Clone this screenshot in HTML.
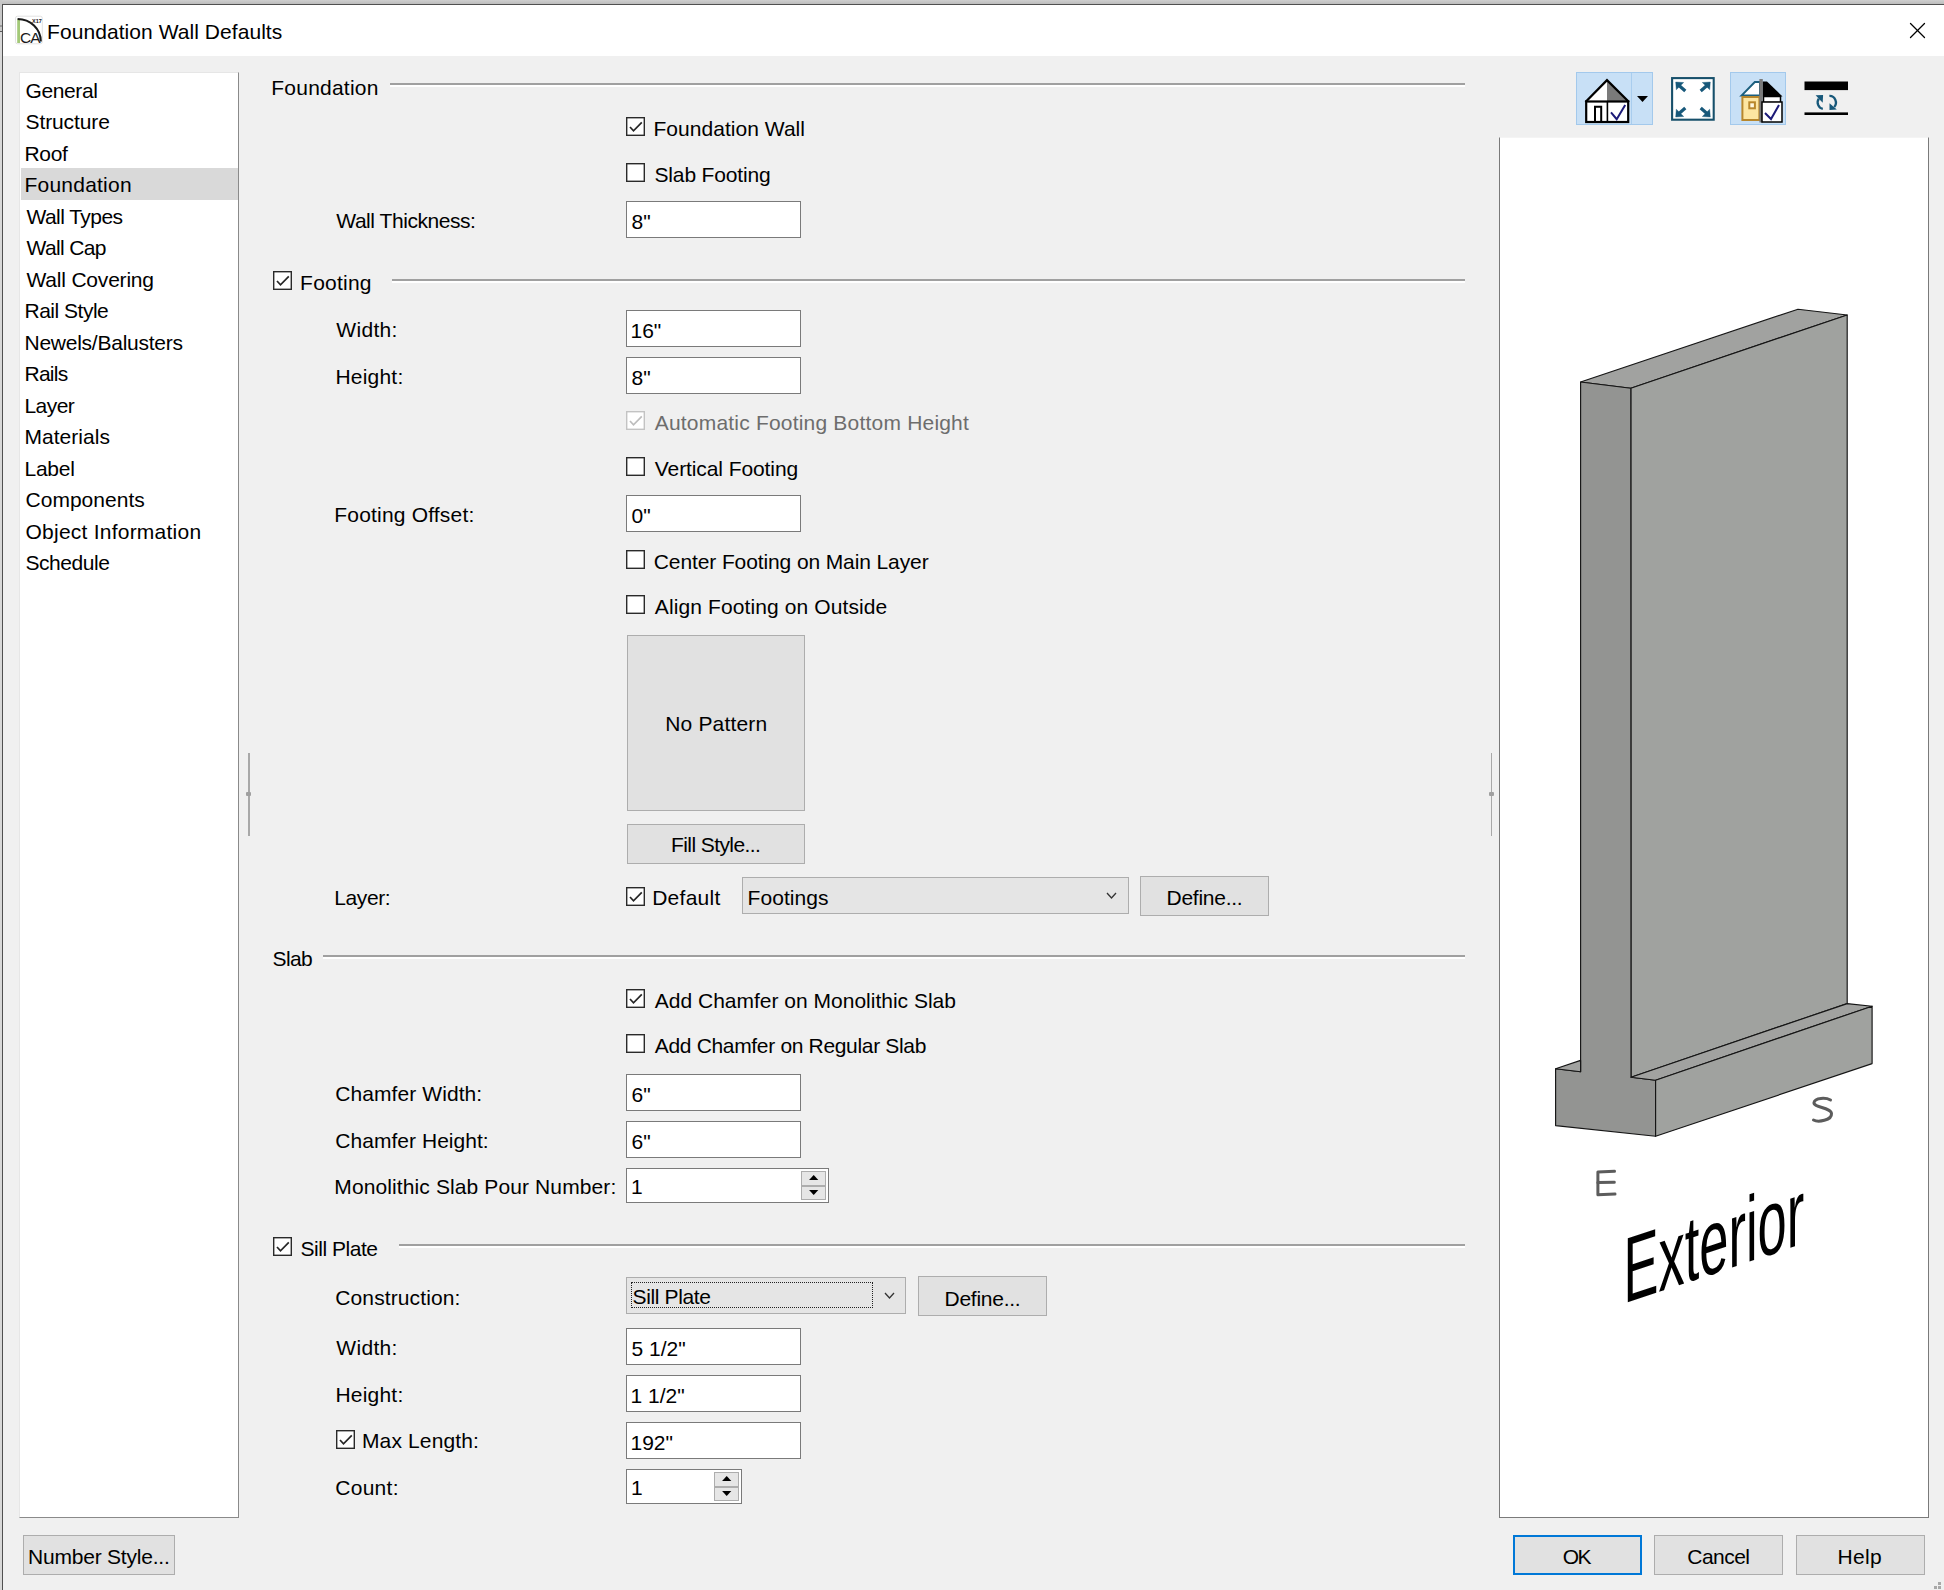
<!DOCTYPE html>
<html><head><meta charset="utf-8"><title>Foundation Wall Defaults</title>
<style>
html,body{margin:0;padding:0;}
body{width:1944px;height:1590px;position:relative;overflow:hidden;background:#f0f0f0;font-family:"Liberation Sans",sans-serif;font-size:21px;color:#000;}
.t{position:absolute;line-height:24px;white-space:pre;}
.ab{position:absolute;overflow:visible;}
</style></head><body>

<div style="position:absolute;left:0px;top:0px;width:1944px;height:4px;background:linear-gradient(#cfcfcf,#bdbdbd);"></div>
<div style="position:absolute;left:0px;top:0px;width:2px;height:1590px;background:#c8c8c8;"></div>
<div style="position:absolute;left:0px;top:25px;width:2px;height:2px;background:#9a9a9a;"></div>
<div style="position:absolute;left:0px;top:31px;width:2px;height:1px;background:#5a5a5a;"></div>
<div style="position:absolute;left:0px;top:32px;width:2px;height:1558px;background:#d8d8d8;"></div>
<div style="position:absolute;left:2px;top:4px;width:1942px;height:1px;background:#505050;"></div>
<div style="position:absolute;left:2px;top:4px;width:1px;height:1586px;background:#505050;"></div>
<div style="position:absolute;left:3px;top:5px;width:1941px;height:51px;background:#ffffff;"></div>
<svg class="ab" style="left:15px;top:15px" width="30" height="32" viewBox="15 15 30 32">
<rect x="15.5" y="16.2" width="26.8" height="27.6" rx="2" fill="none" stroke="#e2e2e2" stroke-width="1"/>
<rect x="17.2" y="19.2" width="2.8" height="23.8" fill="#a3c978"/>
<path d="M17.6,19 A23.2,22.5 0 0 1 40.8,41.5" fill="none" stroke="#1a1a1a" stroke-width="2.1"/>
<text x="20" y="43.3" font-family="Liberation Sans" font-size="15.5" fill="#1a1a1a" letter-spacing="-1">CA</text>
<text x="32" y="22.5" font-family="Liberation Sans" font-size="5.5" font-weight="bold" fill="#1a1a1a">X17</text>
</svg>
<div class="t" style="top:20px;left:47.10px;letter-spacing:0.057px;">Foundation Wall Defaults</div>
<svg class="ab" style="left:1905px;top:18px" width="25" height="25" viewBox="1905 18 25 25">
<line x1="1910.5" y1="23.5" x2="1924.5" y2="37.5" stroke="#000" stroke-width="1.3" stroke-linecap="round"/>
<line x1="1924.5" y1="23.5" x2="1910.5" y2="37.5" stroke="#000" stroke-width="1.3" stroke-linecap="round"/>
</svg>
<div style="position:absolute;left:19px;top:72px;width:220px;height:1446px;background:#fff;box-sizing:border-box;border-left:1px solid #e6e6e6;border-top:1px solid #e6e6e6;border-right:1px solid #8a8a8a;border-bottom:1px solid #8a8a8a;"></div>
<div style="position:absolute;left:21px;top:168px;width:217px;height:32px;background:#d9d9d9;"></div>
<div class="t" style="top:79px;left:25.50px;letter-spacing:-0.383px;">General</div>
<div class="t" style="top:110px;left:25.50px;letter-spacing:-0.100px;">Structure</div>
<div class="t" style="top:142px;left:24.50px;letter-spacing:-0.333px;">Roof</div>
<div class="t" style="top:173px;left:24.50px;letter-spacing:0.222px;">Foundation</div>
<div class="t" style="top:205px;left:26.50px;letter-spacing:-0.556px;">Wall Types</div>
<div class="t" style="top:236px;left:26.50px;letter-spacing:-0.629px;">Wall Cap</div>
<div class="t" style="top:268px;left:26.50px;letter-spacing:-0.200px;">Wall Covering</div>
<div class="t" style="top:299px;left:24.50px;letter-spacing:-0.489px;">Rail Style</div>
<div class="t" style="top:331px;left:24.50px;letter-spacing:-0.247px;">Newels/Balusters</div>
<div class="t" style="top:362px;left:24.50px;letter-spacing:-0.750px;">Rails</div>
<div class="t" style="top:394px;left:24.50px;letter-spacing:-0.575px;">Layer</div>
<div class="t" style="top:425px;left:24.50px;letter-spacing:0.025px;">Materials</div>
<div class="t" style="top:457px;left:24.50px;letter-spacing:-0.250px;">Label</div>
<div class="t" style="top:488px;left:25.50px;letter-spacing:0.022px;">Components</div>
<div class="t" style="top:520px;left:25.50px;letter-spacing:0.235px;">Object Information</div>
<div class="t" style="top:551px;left:25.50px;letter-spacing:-0.443px;">Schedule</div>
<div style="position:absolute;left:248px;top:753px;width:1.5px;height:83px;background:#a8a8a8;"></div>
<div style="position:absolute;left:246px;top:792px;width:5px;height:4px;background:#a0a0a0;border-radius:1px;"></div>
<div style="position:absolute;left:1491px;top:753px;width:1px;height:83px;background:#a8a8a8;"></div>
<div style="position:absolute;left:1489px;top:792px;width:5px;height:4px;background:#a0a0a0;border-radius:1px;"></div>
<div class="t" style="top:76px;left:271.30px;letter-spacing:0.222px;">Foundation</div>
<div style="position:absolute;left:390px;top:83px;width:1075px;height:2px;background:#a0a0a0;"></div>
<div style="position:absolute;left:390px;top:85px;width:1075px;height:2px;background:#ffffff;"></div>
<svg class="ab" style="left:626px;top:117px" width="19" height="19" viewBox="0 0 19 19"><rect x="0.7" y="0.7" width="17.6" height="17.6" fill="#fff" stroke="#2a2a2a" stroke-width="1.4"/><polyline points="4,10 7.5,13.8 15.8,5.4" fill="none" stroke="#262626" stroke-width="1.7"/></svg>
<div class="t" style="top:117px;left:653.50px;letter-spacing:0.036px;">Foundation Wall</div>
<svg class="ab" style="left:626px;top:163px" width="19" height="19" viewBox="0 0 19 19"><rect x="0.7" y="0.7" width="17.6" height="17.6" fill="#fff" stroke="#2a2a2a" stroke-width="1.4"/></svg>
<div class="t" style="top:163px;left:654.50px;letter-spacing:-0.155px;">Slab Footing</div>
<div class="t" style="top:209px;left:336.30px;letter-spacing:-0.450px;">Wall Thickness:</div>
<div style="position:absolute;left:626px;top:201px;width:175px;height:37px;background:#fff;border:1px solid #7a7a7a;box-sizing:border-box;"></div>
<div class="t" style="top:210px;left:631.50px;">8"</div>
<svg class="ab" style="left:273px;top:271px" width="19" height="19" viewBox="0 0 19 19"><rect x="0.7" y="0.7" width="17.6" height="17.6" fill="#fff" stroke="#2a2a2a" stroke-width="1.4"/><polyline points="4,10 7.5,13.8 15.8,5.4" fill="none" stroke="#262626" stroke-width="1.7"/></svg>
<div class="t" style="top:271px;left:300.10px;letter-spacing:0.233px;">Footing</div>
<div style="position:absolute;left:392px;top:279px;width:1073px;height:2px;background:#a0a0a0;"></div>
<div style="position:absolute;left:392px;top:281px;width:1073px;height:2px;background:#ffffff;"></div>
<div class="t" style="top:318px;left:336.30px;letter-spacing:0.320px;">Width:</div>
<div style="position:absolute;left:626px;top:310px;width:175px;height:37px;background:#fff;border:1px solid #7a7a7a;box-sizing:border-box;"></div>
<div class="t" style="top:319px;left:630.50px;">16"</div>
<div class="t" style="top:365px;left:335.40px;letter-spacing:0.217px;">Height:</div>
<div style="position:absolute;left:626px;top:357px;width:175px;height:37px;background:#fff;border:1px solid #7a7a7a;box-sizing:border-box;"></div>
<div class="t" style="top:366px;left:631.50px;">8"</div>
<svg class="ab" style="left:626px;top:411px" width="19" height="19" viewBox="0 0 19 19"><rect x="0.7" y="0.7" width="17.6" height="17.6" fill="#fff" stroke="#c3c3c3" stroke-width="1.4"/><polyline points="4,10 7.5,13.8 15.8,5.4" fill="none" stroke="#bdbdbd" stroke-width="1.7"/></svg>
<div class="t" style="top:411px;left:654.70px;letter-spacing:0.200px;color:#6d6d6d;">Automatic Footing Bottom Height</div>
<svg class="ab" style="left:626px;top:457px" width="19" height="19" viewBox="0 0 19 19"><rect x="0.7" y="0.7" width="17.6" height="17.6" fill="#fff" stroke="#2a2a2a" stroke-width="1.4"/></svg>
<div class="t" style="top:457px;left:654.80px;letter-spacing:-0.093px;">Vertical Footing</div>
<div class="t" style="top:503px;left:334.30px;letter-spacing:0.186px;">Footing Offset:</div>
<div style="position:absolute;left:626px;top:495px;width:175px;height:37px;background:#fff;border:1px solid #7a7a7a;box-sizing:border-box;"></div>
<div class="t" style="top:504px;left:631.50px;">0"</div>
<svg class="ab" style="left:626px;top:550px" width="19" height="19" viewBox="0 0 19 19"><rect x="0.7" y="0.7" width="17.6" height="17.6" fill="#fff" stroke="#2a2a2a" stroke-width="1.4"/></svg>
<div class="t" style="top:550px;left:653.80px;letter-spacing:-0.111px;">Center Footing on Main Layer</div>
<svg class="ab" style="left:626px;top:595px" width="19" height="19" viewBox="0 0 19 19"><rect x="0.7" y="0.7" width="17.6" height="17.6" fill="#fff" stroke="#2a2a2a" stroke-width="1.4"/></svg>
<div class="t" style="top:595px;left:654.80px;letter-spacing:0.109px;">Align Footing on Outside</div>
<div style="position:absolute;left:627px;top:635px;width:178px;height:176px;background:#e1e1e1;border:1px solid #adadad;box-sizing:border-box;"></div>
<div class="t" style="top:712px;left:665.20px;letter-spacing:0.178px;">No Pattern</div>
<div style="position:absolute;left:627px;top:824px;width:178px;height:40px;background:#e1e1e1;border:1px solid #adadad;box-sizing:border-box;"></div>
<div class="t" style="top:833px;left:671.00px;letter-spacing:-0.583px;">Fill Style...</div>
<div class="t" style="top:886px;left:334.30px;letter-spacing:-0.400px;">Layer:</div>
<svg class="ab" style="left:626px;top:887px" width="19" height="19" viewBox="0 0 19 19"><rect x="0.7" y="0.7" width="17.6" height="17.6" fill="#fff" stroke="#2a2a2a" stroke-width="1.4"/><polyline points="4,10 7.5,13.8 15.8,5.4" fill="none" stroke="#262626" stroke-width="1.7"/></svg>
<div class="t" style="top:886px;left:652.20px;letter-spacing:0.267px;">Default</div>
<div style="position:absolute;left:742px;top:877px;width:387px;height:37px;background:#e5e5e5;border:1px solid #adadad;box-sizing:border-box;"></div>
<div class="t" style="top:886px;left:747.60px;letter-spacing:0.057px;">Footings</div>
<svg class="ab" style="left:1106px;top:892px" width="12" height="8" viewBox="0 0 12 8"><polyline points="1,1 5.5,6 10,1" fill="none" stroke="#333" stroke-width="1.3"/></svg>
<div style="position:absolute;left:1140px;top:876px;width:129px;height:40px;background:#e1e1e1;border:1px solid #adadad;box-sizing:border-box;"></div>
<div class="t" style="top:886px;left:1166.50px;letter-spacing:-0.250px;">Define...</div>
<div class="t" style="top:947px;left:272.60px;letter-spacing:-0.667px;">Slab</div>
<div style="position:absolute;left:323px;top:955px;width:1142px;height:2px;background:#a0a0a0;"></div>
<div style="position:absolute;left:323px;top:957px;width:1142px;height:2px;background:#ffffff;"></div>
<svg class="ab" style="left:626px;top:989px" width="19" height="19" viewBox="0 0 19 19"><rect x="0.7" y="0.7" width="17.6" height="17.6" fill="#fff" stroke="#2a2a2a" stroke-width="1.4"/><polyline points="4,10 7.5,13.8 15.8,5.4" fill="none" stroke="#262626" stroke-width="1.7"/></svg>
<div class="t" style="top:989px;left:654.80px;">Add Chamfer on Monolithic Slab</div>
<svg class="ab" style="left:626px;top:1034px" width="19" height="19" viewBox="0 0 19 19"><rect x="0.7" y="0.7" width="17.6" height="17.6" fill="#fff" stroke="#2a2a2a" stroke-width="1.4"/></svg>
<div class="t" style="top:1034px;left:654.80px;letter-spacing:-0.331px;">Add Chamfer on Regular Slab</div>
<div class="t" style="top:1082px;left:335.30px;letter-spacing:0.077px;">Chamfer Width:</div>
<div style="position:absolute;left:626px;top:1074px;width:175px;height:37px;background:#fff;border:1px solid #7a7a7a;box-sizing:border-box;"></div>
<div class="t" style="top:1083px;left:631.50px;">6"</div>
<div class="t" style="top:1129px;left:335.30px;letter-spacing:0.036px;">Chamfer Height:</div>
<div style="position:absolute;left:626px;top:1121px;width:175px;height:37px;background:#fff;border:1px solid #7a7a7a;box-sizing:border-box;"></div>
<div class="t" style="top:1130px;left:631.50px;">6"</div>
<div class="t" style="top:1175px;left:334.30px;letter-spacing:0.111px;">Monolithic Slab Pour Number:</div>
<div style="position:absolute;left:626px;top:1168px;width:203px;height:35px;background:#fff;border:1px solid #7a7a7a;box-sizing:border-box;"></div>
<div class="t" style="top:1175px;left:631.00px;">1</div>
<div style="position:absolute;left:800.5px;top:1171px;width:25.5px;height:15px;background:#e6e6e6;border:1px solid #adadad;box-sizing:border-box;"></div>
<div style="position:absolute;left:800.5px;top:1186px;width:25.5px;height:14px;background:#e6e6e6;border:1px solid #adadad;box-sizing:border-box;"></div>
<svg class="ab" style="left:800.5px;top:1168px" width="26" height="35" viewBox="0 0 26 35"><polygon points="8.1,12 17.299999999999997,12 12.7,7" fill="#000"/><polygon points="8.1,22 17.299999999999997,22 12.7,27" fill="#000"/></svg>
<svg class="ab" style="left:273px;top:1237px" width="19" height="19" viewBox="0 0 19 19"><rect x="0.7" y="0.7" width="17.6" height="17.6" fill="#fff" stroke="#2a2a2a" stroke-width="1.4"/><polyline points="4,10 7.5,13.8 15.8,5.4" fill="none" stroke="#262626" stroke-width="1.7"/></svg>
<div class="t" style="top:1237px;left:300.60px;letter-spacing:-0.478px;">Sill Plate</div>
<div style="position:absolute;left:399px;top:1244px;width:1066px;height:2px;background:#a0a0a0;"></div>
<div style="position:absolute;left:399px;top:1246px;width:1066px;height:2px;background:#ffffff;"></div>
<div class="t" style="top:1286px;left:335.30px;letter-spacing:0.108px;">Construction:</div>
<div style="position:absolute;left:626px;top:1277px;width:280px;height:37px;background:#e5e5e5;border:1px solid #adadad;box-sizing:border-box;"></div>
<div style="position:absolute;left:631px;top:1282px;width:242px;height:26px;border:1px dotted #222;box-sizing:border-box;"></div>
<div class="t" style="top:1285px;left:632.60px;letter-spacing:-0.367px;">Sill Plate</div>
<svg class="ab" style="left:884px;top:1292px" width="12" height="8" viewBox="0 0 12 8"><polyline points="1,1 5.5,6 10,1" fill="none" stroke="#333" stroke-width="1.3"/></svg>
<div style="position:absolute;left:918px;top:1276px;width:129px;height:40px;background:#e1e1e1;border:1px solid #adadad;box-sizing:border-box;"></div>
<div class="t" style="top:1287px;left:944.50px;letter-spacing:-0.250px;">Define...</div>
<div class="t" style="top:1336px;left:336.30px;letter-spacing:0.320px;">Width:</div>
<div style="position:absolute;left:626px;top:1328px;width:175px;height:37px;background:#fff;border:1px solid #7a7a7a;box-sizing:border-box;"></div>
<div class="t" style="top:1337px;left:631.50px;">5 1/2"</div>
<div class="t" style="top:1383px;left:335.40px;letter-spacing:0.217px;">Height:</div>
<div style="position:absolute;left:626px;top:1375px;width:175px;height:37px;background:#fff;border:1px solid #7a7a7a;box-sizing:border-box;"></div>
<div class="t" style="top:1384px;left:630.50px;">1 1/2"</div>
<svg class="ab" style="left:336px;top:1430px" width="19" height="19" viewBox="0 0 19 19"><rect x="0.7" y="0.7" width="17.6" height="17.6" fill="#fff" stroke="#2a2a2a" stroke-width="1.4"/><polyline points="4,10 7.5,13.8 15.8,5.4" fill="none" stroke="#262626" stroke-width="1.7"/></svg>
<div class="t" style="top:1429px;left:362.00px;letter-spacing:0.130px;">Max Length:</div>
<div style="position:absolute;left:626px;top:1422px;width:175px;height:37px;background:#fff;border:1px solid #7a7a7a;box-sizing:border-box;"></div>
<div class="t" style="top:1431px;left:630.50px;">192"</div>
<div class="t" style="top:1476px;left:335.30px;letter-spacing:0.260px;">Count:</div>
<div style="position:absolute;left:626px;top:1469px;width:116px;height:35px;background:#fff;border:1px solid #7a7a7a;box-sizing:border-box;"></div>
<div class="t" style="top:1476px;left:631.00px;">1</div>
<div style="position:absolute;left:713.5px;top:1472px;width:25.5px;height:15px;background:#e6e6e6;border:1px solid #adadad;box-sizing:border-box;"></div>
<div style="position:absolute;left:713.5px;top:1487px;width:25.5px;height:14px;background:#e6e6e6;border:1px solid #adadad;box-sizing:border-box;"></div>
<svg class="ab" style="left:713.5px;top:1469px" width="26" height="35" viewBox="0 0 26 35"><polygon points="8.1,12 17.299999999999997,12 12.7,7" fill="#000"/><polygon points="8.1,22 17.299999999999997,22 12.7,27" fill="#000"/></svg>
<div style="position:absolute;left:23px;top:1535px;width:152px;height:40px;background:#e1e1e1;border:1px solid #adadad;box-sizing:border-box;"></div>
<div class="t" style="top:1545px;left:28.00px;letter-spacing:-0.214px;">Number Style...</div>
<div style="position:absolute;left:1513px;top:1535px;width:129px;height:40px;background:#e1e1e1;border:2px solid #0078d7;box-sizing:border-box;"></div>
<div class="t" style="top:1545px;left:1562.75px;letter-spacing:-1.500px;">OK</div>
<div style="position:absolute;left:1654px;top:1535px;width:129px;height:40px;background:#e1e1e1;border:1px solid #adadad;box-sizing:border-box;"></div>
<div class="t" style="top:1545px;left:1687.35px;letter-spacing:-0.540px;">Cancel</div>
<div style="position:absolute;left:1796px;top:1535px;width:129px;height:40px;background:#e1e1e1;border:1px solid #adadad;box-sizing:border-box;"></div>
<div class="t" style="top:1545px;left:1837.50px;letter-spacing:0.333px;">Help</div>
<div style="position:absolute;left:1938px;top:1582px;width:3px;height:3px;background:#a8a8a8;"></div>
<div style="position:absolute;left:1934px;top:1586px;width:3px;height:3px;background:#a8a8a8;"></div>
<div style="position:absolute;left:1938px;top:1586px;width:3px;height:3px;background:#a8a8a8;"></div>
<div style="position:absolute;left:1576px;top:72px;width:77px;height:53px;background:#c8e0f6;border:1px solid #a3c9ec;box-sizing:border-box;"></div>
<div style="position:absolute;left:1631px;top:73px;width:1px;height:51px;background:#a9cdee;"></div>
<svg class="ab" style="left:1570px;top:66px" width="90" height="64" viewBox="1570 66 90 64">
<polygon points="1607,80 1607,101.5 1586,101.5" fill="#fff"/>
<polygon points="1607,80 1628,101.5 1607,101.5" fill="#7a7a7a"/>
<rect x="1586.2" y="101.5" width="42" height="20.5" fill="#fff" stroke="#000" stroke-width="2.2"/>
<polyline points="1585.5,102 1607,80.2 1629,102" fill="none" stroke="#000" stroke-width="2.3" stroke-linejoin="miter"/>
<line x1="1607.4" y1="101.5" x2="1607.4" y2="122" stroke="#000" stroke-width="1.6"/>
<polyline points="1595,122 1595,106.7 1601.2,106.7 1601.2,122" fill="none" stroke="#000" stroke-width="2"/>
<polyline points="1611,112.3 1616.7,119.2 1625.2,105" fill="none" stroke="#1c1a78" stroke-width="2"/>
<polygon points="1637,96 1648,96 1642.5,102" fill="#000"/>
</svg>
<svg class="ab" style="left:1665px;top:70px" width="56" height="56" viewBox="1665 70 56 56">
<rect x="1672.1" y="78.1" width="41.6" height="41.6" fill="#fff" stroke="#17506b" stroke-width="2.1"/>
<g fill="#17587a" stroke="#17587a">
<polygon points="1675.7,82 1683.7,82.5 1676.3,89.8" stroke-width="0.4"/>
<line x1="1679" y1="85.5" x2="1685.3" y2="91" stroke-width="3.2"/>
<polygon points="1710.3,82 1702.3,82.5 1709.7,89.8" stroke-width="0.4"/>
<line x1="1707" y1="85.5" x2="1700.7" y2="91" stroke-width="3.2"/>
<polygon points="1675.7,117 1683.7,116.5 1676.3,109.2" stroke-width="0.4"/>
<line x1="1679" y1="113.5" x2="1685.3" y2="108" stroke-width="3.2"/>
<polygon points="1710.3,117 1702.3,116.5 1709.7,109.2" stroke-width="0.4"/>
<line x1="1707" y1="113.5" x2="1700.7" y2="108" stroke-width="3.2"/>
</g></svg>
<div style="position:absolute;left:1730px;top:72px;width:56px;height:53px;background:#c8e0f6;border:1px solid #a3c9ec;box-sizing:border-box;"></div>
<svg class="ab" style="left:1730px;top:72px" width="56" height="53" viewBox="1730 72 56 53">
<polygon points="1741.5,95.6 1754.8,82 1760,82 1760,95.6" fill="#fff" stroke="#1b5f7e" stroke-width="2"/>
<polygon points="1762.5,81.5 1767,81.5 1782.5,96.5 1762.5,96.5" fill="#000"/>
<rect x="1742.4" y="97" width="17" height="23" fill="#fde6a2" stroke="#b8872c" stroke-width="2"/>
<rect x="1749.3" y="102.3" width="5.6" height="6" fill="#fff8e0" stroke="#b8872c" stroke-width="2"/>
<rect x="1763.5" y="96.5" width="17" height="6" fill="#fff" stroke="#000" stroke-width="1.5"/>
<rect x="1759.4" y="79" width="3.4" height="43.5" fill="#7a7a7a"/>
<rect x="1762" y="102" width="20" height="20" fill="#fff" stroke="#000" stroke-width="1.5"/>
<polyline points="1765,113 1771,119 1779,105" fill="none" stroke="#1c1a78" stroke-width="2"/>
</svg>
<svg class="ab" style="left:1800px;top:75px" width="52" height="45" viewBox="1800 75 52 45">
<rect x="1804.5" y="81.5" width="43.5" height="8.6" fill="#000"/>
<rect x="1804.5" y="112.4" width="43.5" height="2.6" fill="#000"/>
<path d="M1822.8,108.9 A6.2,6.6 0 0 1 1818.8,98.6" fill="none" stroke="#17587a" stroke-width="2.3"/>
<polygon points="1815.6,95.3 1823.1,94.9 1822.7,102.7" fill="#17587a"/>
<path d="M1829.4,95.9 A6.2,6.6 0 0 1 1834.2,107" fill="none" stroke="#17587a" stroke-width="2.3"/>
<polygon points="1829.5,103.2 1829.5,109.9 1836.8,109.6" fill="#17587a"/>
</svg>
<div style="position:absolute;left:1499px;top:137px;width:430px;height:1381px;background:#fff;box-sizing:border-box;border-left:1px solid #7a7a7a;border-top:1px solid #f4f4f4;border-right:1px solid #7a7a7a;border-bottom:1px solid #7a7a7a;"></div>
<svg class="ab" style="left:1500px;top:140px" width="428" height="1376" viewBox="1500 140 428 1376">
<g stroke="#151515" stroke-width="1.15" stroke-linejoin="round">
<polygon points="1580.6,382 1798,309.2 1847.2,315 1630.8,388.2" fill="#a1a2a0"/>
<polygon points="1630.8,388.2 1847.2,315 1847.2,1003.6 1631,1077.2" fill="#a0a29f"/>
<polygon points="1555.6,1068.8 1580.6,1071.7 1580.6,382 1630.8,388.2 1631,1077.2 1655.6,1080.3 1655.6,1136.3 1555.6,1125.6" fill="#939492"/>
<polygon points="1555.6,1068.8 1580.6,1060.4 1580.6,1071.7" fill="#a1a2a0"/>
<polygon points="1631,1077.2 1847.2,1003.6 1872.1,1006.2 1655.6,1080.3" fill="#a1a2a0"/>
<polygon points="1655.6,1080.3 1872.1,1006.2 1872.1,1063.6 1655.6,1136.3" fill="#a0a29f"/>
</g>
<g fill="none" stroke="#5c5c5c" stroke-width="3" stroke-linecap="round" stroke-linejoin="round">
<polyline points="1614.5,1171.2 1597.9,1172 1597.9,1194.8 1615,1194"/>
<line x1="1597.9" y1="1182.6" x2="1614.3" y2="1182.2"/>
<path d="M1830.5,1100 C1826,1097.5 1815,1097.5 1814,1102.5 C1813,1107.5 1831,1107.5 1831.5,1113.5 C1832,1120.5 1818,1122.5 1813.5,1120"/>
</g>
</svg>
<svg class="ab" style="left:1600px;top:1150px" width="260" height="180" viewBox="1600 1150 260 180"><g transform="matrix(0.564,-0.189,0,1,1623.5,1303.8)"><text x="0" y="0" font-family="Liberation Sans" font-size="93" fill="#000">Exterior</text></g></svg>
</body></html>
